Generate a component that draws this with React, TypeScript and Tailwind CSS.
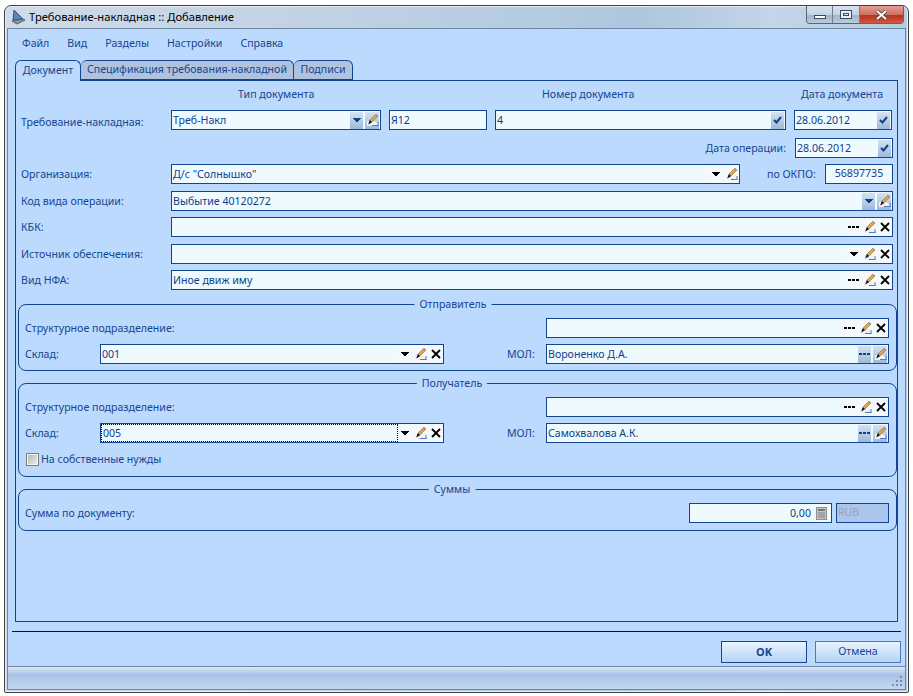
import type { ReactNode } from "react";

type Btn = "arrow" | "pencil" | "dots" | "x" | "check" | "calc";

const Arrow = () => (
  <svg width="8" height="4" viewBox="0 0 8 4" shapeRendering="crispEdges" fill="currentColor">
    <path d="M0 0h8v1H7v1H6v1H5v1H3V3H2V2H1V1H0z" />
  </svg>
);

const Pencil = () => (
  <svg width="13" height="14" viewBox="0 0 13 14">
    <path d="M1 8h7l4 2v3H1z" fill="#eef2f8" />
    <path d="M6 12.5h6.5M12 9v4" stroke="#5c78b4" strokeWidth="1" />
    <path d="M9.5 1.5l2 2-5.5 5.5-2-2z" fill="#dba654" stroke="#8a6a3a" strokeWidth="0.6" />
    <path d="M3.8 7l2.2 2.2-3.8 2.3z" fill="#0c0c0c" />
    <path d="M9.8 1.4l2 2" stroke="#b9806e" strokeWidth="1.4" />
  </svg>
);

const Dots = () => (
  <svg width="11" height="3" viewBox="0 0 11 3" shapeRendering="crispEdges" fill="currentColor">
    <rect x="0" y="0" width="3" height="2" />
    <rect x="4" y="0" width="3" height="2" />
    <rect x="8" y="0" width="3" height="2" />
  </svg>
);

const Cross = () => (
  <svg width="10" height="10" viewBox="0 0 10 10" fill="none" stroke="#000" strokeWidth="1.8">
    <path d="M1 1l8 8M9 1l-8 8" />
  </svg>
);

const Check = () => (
  <svg width="9" height="8" viewBox="0 0 9 8" fill="none" stroke="currentColor" strokeWidth="2">
    <path d="M1 4l2.5 2.5L8 1" />
  </svg>
);

const Calc = () => (
  <svg width="11" height="13" viewBox="0 0 11 13" shapeRendering="crispEdges">
    <rect x="0.5" y="0.5" width="10" height="12" fill="#c4c4c4" stroke="#8f8f8f" />
    <rect x="2" y="2" width="7" height="2" fill="#777" />
    <rect x="2" y="5" width="7" height="6" fill="#a3a3a3" />
  </svg>
);

function FieldButton({ kind, active }: { kind: Btn; active?: boolean }) {
  const tone = active
    ? "bg-[linear-gradient(#d3e3f1,#9dbad8)] text-[#133f8f]"
    : "bg-[#f6f9fb] text-black";
  return (
    <span className={`flex h-[17px] shrink-0 items-center justify-center ${kind === "pencil" ? "w-[14px]" : "w-[13px]"} ${tone}`}>
      {kind === "arrow" && <Arrow />}
      {kind === "pencil" && <Pencil />}
      {kind === "dots" && <Dots />}
      {kind === "x" && <Cross />}
      {kind === "check" && <Check />}
      {kind === "calc" && <Calc />}
    </span>
  );
}

function Field({
  w,
  text,
  buttons = [],
  active,
  focused,
  right,
}: {
  w: string;
  text?: string;
  buttons?: Btn[];
  active?: boolean;
  focused?: boolean;
  right?: boolean;
}) {
  return (
    <div className={`flex h-5 shrink-0 items-center border border-[#134592] bg-[#eefaff] ${w}`}>
      <span
        className={`min-w-0 flex-1 truncate pl-px leading-[16px] text-[#0f3f8c] ${right ? "pr-[4px] text-right" : ""} ${focused ? "border border-dotted border-black" : ""}`}
      >
        {text}
      </span>
      <span className={`flex items-center gap-[2px] ${right ? "pr-[3px]" : "pr-[1px]"}`}>
        {buttons.map((b, i) => (
          <FieldButton key={i} kind={b} active={active} />
        ))}
      </span>
    </div>
  );
}

function Group({ title, h, left, children }: { title: string; h: string; left: string; children: ReactNode }) {
  return (
    <div className={`relative ml-[2px] w-[879px] rounded-[8px] border border-[#134592] ${h}`}>
      <span className={`absolute top-[-8px] -translate-x-1/2 bg-[#bcd9fe] px-[5px] leading-[14px] text-[#17458f] ${left}`}>
        {title}
      </span>
      {children}
    </div>
  );
}

function Label({ w, children }: { w: string; children: ReactNode }) {
  return <span className={`shrink-0 leading-[14px] text-[#17458f] ${w}`}>{children}</span>;
}

export default function App() {
  return (
    <div className="h-[696px] w-[913px] bg-white pl-[4px] pt-[5px] font-['Noto_Sans',sans-serif] text-[10.6px]">
      <div className="flex h-[688px] w-[905px] flex-col rounded-t-[7px] rounded-b-[2px] border border-[#404040] bg-[linear-gradient(90deg,#cfdbe8_0%,#c3d3e4_30%,#b4cbe2_60%,#aec6dd_70%,#c3d5e8_85%,#b6cbdf_100%)] px-[2px] pb-[2px] shadow-[inset_0_0_0_1px_#e6eef6]">
        <div className="flex h-[22px] shrink-0 items-center">
          <svg width="15" height="15" viewBox="0 0 15 15" className="ml-[4px] mr-[3px]">
            <path d="M3 0l9 9-10 1z" fill="#5b86b8" stroke="#20426e" strokeWidth="0.8" />
            <path d="M1 11l11-2 2 1-8 4z" fill="#8d98a8" stroke="#3d4a5c" strokeWidth="0.8" />
          </svg>
          <span className="text-[11.2px] text-black">Требование-накладная :: Добавление</span>
          <div className="ml-auto mr-[2px] flex h-[18px] self-start overflow-hidden rounded-b-[4px] border border-t-0 border-[#56667a]">
            <div className="flex w-[26px] items-center justify-center border-r border-[#6d7f94] bg-[linear-gradient(#d6e2ee_0%,#c4d3e3_50%,#9fb3c9_51%,#b9cbdd_100%)]">
              <span className="mt-[5px] h-[4px] w-[12px] border border-[#3d4a5c] bg-white" />
            </div>
            <div className="flex w-[27px] items-center justify-center border-r border-[#6d7f94] bg-[linear-gradient(#d6e2ee_0%,#c4d3e3_50%,#9fb3c9_51%,#b9cbdd_100%)]">
              <span className="flex h-[9px] w-[12px] items-center justify-center border border-[#3d4a5c] bg-[#e8eef5]">
                <span className="h-[3px] w-[6px] border border-[#3d4a5c]" />
              </span>
            </div>
            <div className="flex w-[43px] items-center justify-center bg-[linear-gradient(#e4a096_0%,#cf6f60_50%,#b52f1c_51%,#d2573f_100%)]">
              <svg width="13" height="10" viewBox="0 0 13 10" fill="none">
                <path d="M2 1l9 8M11 1l-9 8" stroke="#3d3d3d" strokeWidth="3.4" />
                <path d="M2 1l9 8M11 1l-9 8" stroke="#fff" strokeWidth="2" />
              </svg>
            </div>
          </div>
        </div>

        <div className="flex min-h-0 flex-1 flex-col border border-[#6f86a3] bg-[#bcd9fe]">
          <div className="flex h-[31px] shrink-0 items-center gap-[18px] pb-[1px] pl-[14px] text-[#17458f]">
            <span>Файл</span>
            <span>Вид</span>
            <span>Разделы</span>
            <span>Настройки</span>
            <span>Справка</span>
          </div>

          <div className="relative z-10 -mb-px ml-[7px] flex h-[21px] shrink-0 text-[#17458f]">
            <div className="flex w-[66px] items-center justify-center rounded-t-[6px] border border-b-0 border-[#134592] bg-[#bcd9fe]">Документ</div>
            <div className="flex h-[20px] w-[213px] items-center justify-center rounded-t-[6px] border border-l-0 border-[#134592] bg-[#afc3de]">Спецификация требования-накладной</div>
            <div className="flex h-[20px] w-[59px] items-center justify-center rounded-t-[6px] border border-l-0 border-[#134592] bg-[#afc3de]">Подписи</div>
          </div>

          <div className="ml-[7px] h-[542px] w-[883px] shrink-0 border border-[#134592]">
            <div className="mt-[6px] flex h-[15px] items-center text-[#17458f]">
              <span className="ml-[222px] w-[304px]">Тип документа</span>
              <span className="w-[259px]">Номер документа</span>
              <span>Дата документа</span>
            </div>

            <div className="mt-[8px] flex items-center">
              <Label w="w-[155px] pl-[5px] pt-[4px]">Требование-накладная:</Label>
              <Field w="w-[210px]" text="Треб-Накл" buttons={["arrow", "pencil"]} active />
              <Field w="ml-[8px] w-[98px]" text="Я12" />
              <Field w="ml-[8px] w-[291px]" text="4" buttons={["check"]} active />
              <Field w="ml-[8px] w-[98px]" text="28.06.2012" buttons={["check"]} active />
            </div>

            <div className="mt-[8px] flex items-center justify-end pr-[4px]">
              <Label w="mr-[9px]">Дата операции:</Label>
              <Field w="w-[98px]" text="28.06.2012" buttons={["check"]} active />
            </div>

            <div className="mt-[6px] flex items-center">
              <Label w="w-[155px] pl-[5px]">Организация:</Label>
              <Field w="w-[569px]" text="Д/с &quot;Солнышко&quot;" buttons={["arrow", "pencil"]} />
              <Label w="ml-[27px] w-[58px]">по ОКПО:</Label>
              <div className="flex h-5 w-[68px] shrink-0 items-center justify-center border border-[#134592] bg-[#eefaff] text-[#0f3f8c]">56897735</div>
            </div>

            <div className="mt-[7px] flex items-center">
              <Label w="w-[155px] pl-[5px]">Код вида операции:</Label>
              <Field w="w-[722px]" text="Выбытие 40120272" buttons={["arrow", "pencil"]} active />
            </div>

            <div className="mt-[6px] flex items-center">
              <Label w="w-[155px] pl-[5px]">КБК:</Label>
              <Field w="w-[722px]" buttons={["dots", "pencil", "x"]} />
            </div>

            <div className="mt-[7px] flex items-center">
              <Label w="w-[155px] pl-[5px]">Источник обеспечения:</Label>
              <Field w="w-[722px]" buttons={["arrow", "pencil", "x"]} />
            </div>

            <div className="mb-[14px] mt-[6px] flex items-center">
              <Label w="w-[155px] pl-[5px]">Вид НФА:</Label>
              <Field w="w-[722px]" text="Иное движ иму" buttons={["dots", "pencil", "x"]} />
            </div>

            <Group title="Отправитель" h="h-[67px]" left="left-[434px]">
              <div className="mt-[13px] flex items-center">
                <Label w="w-[527px] pl-[6px]">Структурное подразделение:</Label>
                <Field w="w-[343px]" buttons={["dots", "pencil", "x"]} />
              </div>
              <div className="mt-[6px] flex items-center">
                <Label w="w-[81px] pl-[6px]">Склад:</Label>
                <Field w="w-[344px]" text="001" buttons={["arrow", "pencil", "x"]} />
                <Label w="ml-[63px] w-[39px]">МОЛ:</Label>
                <Field w="w-[343px]" text="Вороненко Д.А." buttons={["dots", "pencil"]} active />
              </div>
            </Group>

            <Group title="Получатель" h="mt-[12px] h-[94px]" left="left-[433px]">
              <div className="mt-[13px] flex items-center">
                <Label w="w-[527px] pl-[6px]">Структурное подразделение:</Label>
                <Field w="w-[343px]" buttons={["dots", "pencil", "x"]} />
              </div>
              <div className="mt-[6px] flex items-center">
                <Label w="w-[81px] pl-[6px]">Склад:</Label>
                <Field w="w-[344px]" text="005" buttons={["arrow", "pencil", "x"]} focused />
                <Label w="ml-[63px] w-[39px]">МОЛ:</Label>
                <Field w="w-[343px]" text="Самохвалова А.К." buttons={["dots", "pencil"]} active />
              </div>
              <div className="mt-[9px] flex items-center pl-[7px] text-[#17458f]">
                <span className="mr-[2px] h-[13px] w-[13px] border border-[#7d7d7d] bg-[linear-gradient(135deg,#b5b5b5,#eeeeee)] shadow-[inset_0_0_0_1px_#f4f4f4]" />
                На собственные нужды
              </div>
            </Group>

            <Group title="Суммы" h="mt-[12px] h-[42px]" left="left-[433px]">
              <div className="mt-[13px] flex items-center">
                <Label w="w-[670px] pl-[6px]">Сумма по документу:</Label>
                <Field w="w-[143px]" text="0,00" buttons={["calc"]} right />
                <span className="ml-[4px] flex h-5 w-[53px] items-center border border-[#134592] bg-[#abc6ec] pl-px text-[#9aa4b4]">RUB</span>
              </div>
            </Group>
          </div>

          <div className="ml-[4px] mt-[9px] h-px w-[889px] shrink-0 bg-[#000a6e]" />

          <div className="mt-[9px] flex shrink-0 justify-end gap-[8px] pr-[4px]">
            <button className="h-[22px] w-[86px] border border-[#134592] bg-[linear-gradient(#e8f4ff,#b5d4f7)] text-[11px] font-bold text-[#17458f]">OK</button>
            <button className="h-[22px] w-[86px] border border-[#4d7bb5] bg-[linear-gradient(#e8f4ff,#b5d4f7)] text-[#17458f]">Отмена</button>
          </div>

          <div className="mt-auto flex h-[23px] shrink-0 items-end justify-end border-t border-[#6f86a3] bg-[linear-gradient(#dbe7f6_0%,#a9c3e6_35%,#c4d7ef_100%)] pb-[2px] pr-[2px]">
            <svg width="11" height="11" viewBox="0 0 11 11" shapeRendering="crispEdges" fill="#7b8ea6">
              <rect x="8" y="0" width="2" height="2" />
              <rect x="4" y="4" width="2" height="2" />
              <rect x="8" y="4" width="2" height="2" />
              <rect x="0" y="8" width="2" height="2" />
              <rect x="4" y="8" width="2" height="2" />
              <rect x="8" y="8" width="2" height="2" />
            </svg>
          </div>
        </div>
      </div>
    </div>
  );
}
